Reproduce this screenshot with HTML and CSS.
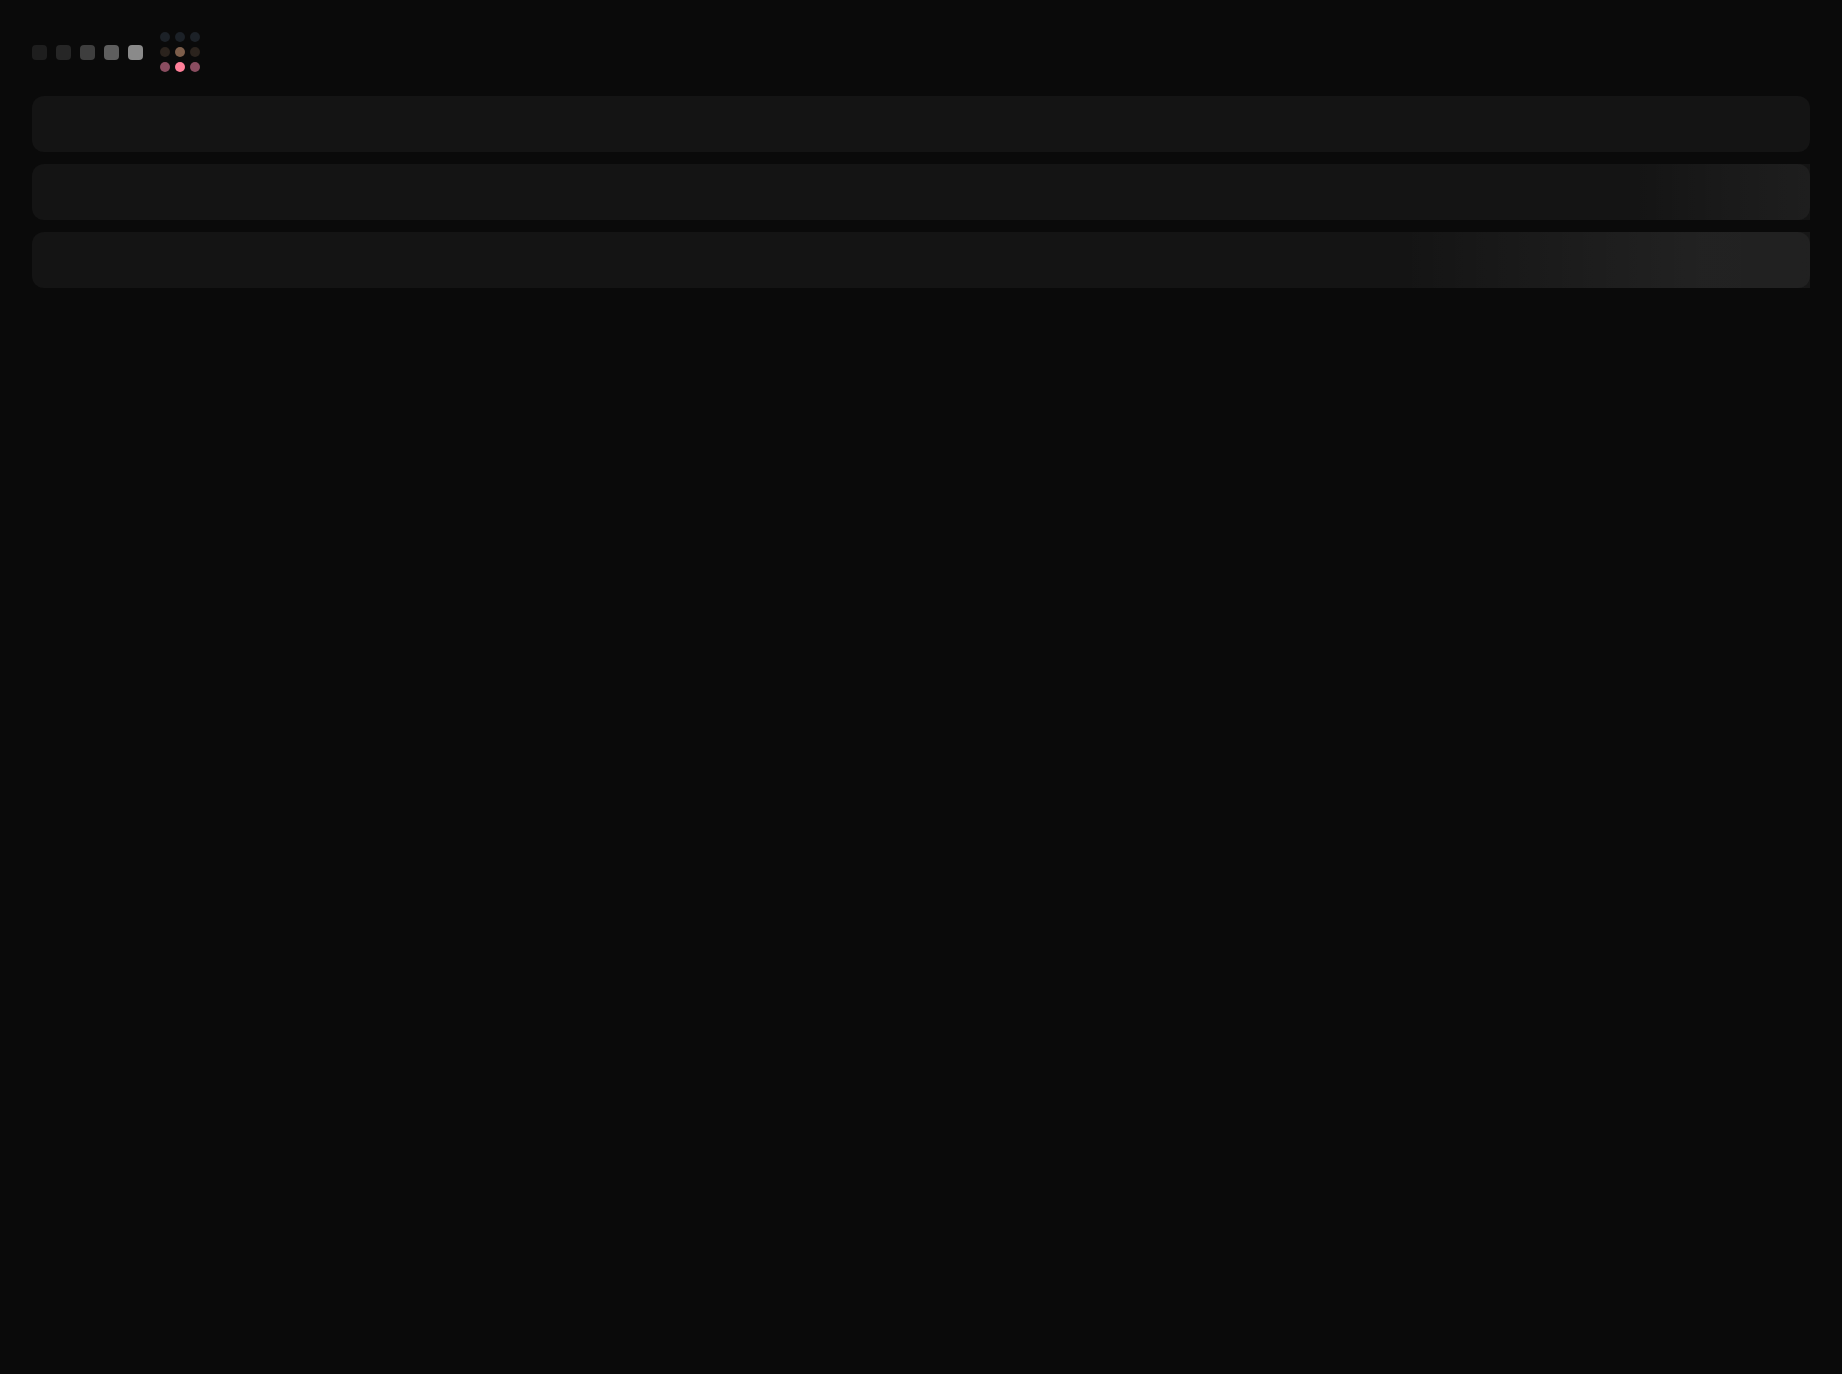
FILE: index.html
```html
<!DOCTYPE html>
<html lang="en">
<head>
<meta charset="utf-8">
<title>Skeleton</title>
<link rel="stylesheet" href="styles.css">
</head>
<body>
<div class="page">
  <header class="header">
    <div class="swatches">
      <span class="swatch s1"></span>
      <span class="swatch s2"></span>
      <span class="swatch s3"></span>
      <span class="swatch s4"></span>
      <span class="swatch s5"></span>
    </div>
    <div class="dots">
      <span class="dot d-blue"></span>
      <span class="dot d-blue"></span>
      <span class="dot d-blue"></span>
      <span class="dot d-brown-dim"></span>
      <span class="dot d-brown"></span>
      <span class="dot d-brown-dim"></span>
      <span class="dot d-pink-dim"></span>
      <span class="dot d-pink"></span>
      <span class="dot d-pink-dim"></span>
    </div>
  </header>
  <main class="list">
    <div class="bar"></div>
    <div class="bar bar-shimmer-a"></div>
    <div class="bar bar-shimmer-b"></div>
  </main>
</div>
</body>
</html>
```

FILE: styles.css
```css
html, body {
  margin: 0;
  padding: 0;
  background: #0a0a0a;
  font-family: "Inter", "Liberation Sans", sans-serif;
}

.page {
  padding: 32px;
}

.header {
  display: flex;
  align-items: center;
  gap: 17px;
  height: 40px;
}

.swatches {
  display: flex;
  align-items: center;
  gap: 9px;
}

.swatch {
  display: block;
  width: 15px;
  height: 15px;
  border-radius: 4px;
}

.s1 { background: #1e1e1e; }
.s2 { background: #262626; }
.s3 { background: #3e3e3e; }
.s4 { background: #5e5e5e; }
.s5 { background: #8a8a8a; }

.dots {
  display: grid;
  grid-template-columns: repeat(3, 10px);
  grid-auto-rows: 10px;
  gap: 5px;
}

.dot {
  display: block;
  width: 10px;
  height: 10px;
  border-radius: 50%;
}

.d-blue { background: #1c2127; }
.d-brown-dim { background: #2b231d; }
.d-brown { background: #7d5e4b; }
.d-pink-dim { background: #8a4d60; }
.d-pink { background: #ff7f99; }

.list {
  display: flex;
  flex-direction: column;
  gap: 12px;
  margin-top: 24px;
}

.bar {
  position: relative;
  height: 56px;
  border-radius: 12px;
  background: #141414;
}

.bar-shimmer-a::after,
.bar-shimmer-b::after {
  content: "";
  position: absolute;
  inset: 0;
  pointer-events: none;
}

.bar-shimmer-a::after {
  background: linear-gradient(90deg,
    rgba(255, 255, 255, 0) 0%,
    rgba(255, 255, 255, 0) 90%,
    rgba(255, 255, 255, 0.025) 95%,
    rgba(255, 255, 255, 0.045) 100%);
}

.bar-shimmer-b::after {
  background: linear-gradient(90deg,
    rgba(255, 255, 255, 0) 0%,
    rgba(255, 255, 255, 0) 77%,
    rgba(255, 255, 255, 0.035) 87%,
    rgba(255, 255, 255, 0.06) 94%,
    rgba(255, 255, 255, 0.055) 100%);
}
```
